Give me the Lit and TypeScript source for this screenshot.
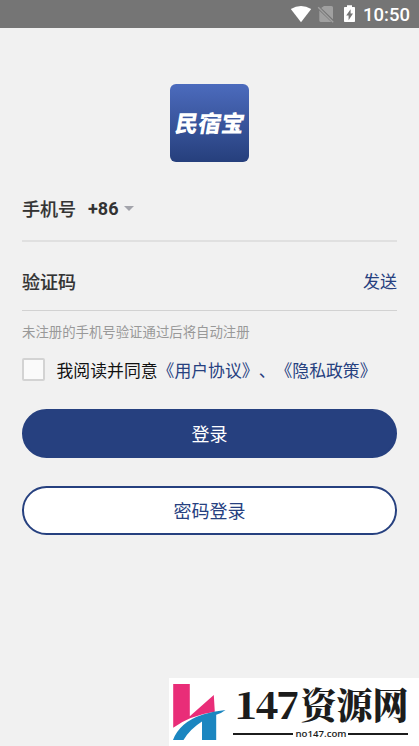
import { LitElement, html, css } from "lit";
import { customElement } from "lit/decorators.js";

@customElement("status-icons")
class StatusIcons extends LitElement {
  static styles = css`
    :host { display: block; width: 73px; height: 28px; }
    svg { display: block; }
  `;
  render() {
    return html`
      <svg width="73" height="28" viewBox="290 0 73 28">
        <path fill="#fff" d="M290.8 9.1Q301 2.7 311.2 9.1L301 22.2Z" />
        <path fill="#a0a0a0" d="M324 6H331.5Q333 6 333 7.5V19.2L321.2 7.9ZM319.3 10.5L331.3 22H320.6Q319.3 22 319.3 20.6Z" />
        <path stroke="#a0a0a0" stroke-width="1.4" d="M318.2 7.3L333.2 22.2" />
        <path fill="#fff" d="M347 5.3H352V7H354.2Q355 7 355 7.8V21.2Q355 22 354.2 22H344.8Q344 22 344 21.2V7.8Q344 7 344.8 7H347Z" />
        <path fill="#757575" d="M350.6 9.2V13.5H353L348.6 20.2V15.6H346.2Z" />
      </svg>
    `;
  }
}

@customElement("site-banner")
class SiteBanner extends LitElement {
  static styles = css`
    :host { display: block; width: 250px; height: 68px; background: #fff; }
    svg { display: block; overflow: visible; }
    .num { font: 900 38px "Noto Serif CJK SC", "Liberation Serif", serif; }
    .cjk { font: 900 36px "Noto Serif CJK SC", "Noto Sans CJK SC", serif; }
    .url { font: 600 9px "Open Sans", "Noto Sans", sans-serif; }
  `;
  render() {
    return html`
      <svg width="250" height="68" viewBox="169 678 250 68">
        <path fill="#e92d78" d="M173.2 684H189.8V716.2L213.8 695L214.8 711.8Q190 715.5 173.2 727.8Z" />
        <path fill="#1b86c0" d="M173 740Q180 722 203 714.6Q213 711.3 225.5 710Q222 713 216.2 714.8V740H202V721.5Q190 729 183.5 740Z" />
        <g fill="#1c1c1c">
          <text class="num" x="234.5" y="718.5" textLength="65">147</text>
          <text class="cjk" x="300.5" y="718.5" textLength="108">资源网</text>
          <text class="url" x="295.5" y="736.5" textLength="51" lengthAdjust="spacingAndGlyphs">no147.com</text>
          <rect x="233" y="733" width="60" height="2" />
          <rect x="348" y="733" width="60" height="2" />
        </g>
      </svg>
    `;
  }
}

@customElement("app-root")
class AppRoot extends LitElement {
  static styles = css`
    :host {
      display: flex; flex-direction: column; height: 746px; box-sizing: border-box;
      background: #f1f1f1; color: #333; font-family: Roboto, "Noto Sans CJK SC", sans-serif;
      text-spacing-trim: space-all;
    }
    .status { display: flex; justify-content: flex-end; background: #757575; height: 28px; flex: none; }
    .time { width: 56px; font: 500 18.5px/30px Roboto, sans-serif; color: #fff; }
    .logo {
      align-self: center; margin-top: 56px; width: 79px; height: 78px; border-radius: 6px; flex: none;
      background: linear-gradient(#4c6bbd, #263f7c);
    }
    .logo svg { display: block; overflow: visible; }
    .brand { font: 900 23px "Noto Sans CJK SC", sans-serif; }
    .form { padding: 0 22px; display: flex; flex-direction: column; flex: 1; }
    .row { display: flex; align-items: center; box-sizing: border-box; font-size: 18px; line-height: 26px; }
    .phone { height: 80px; padding-top: 13px; border-bottom: 2px solid #e0e0e0; }
    .code { height: 69px; padding-top: 10px; border-bottom: 1px solid #d2d2d2; justify-content: space-between; }
    .label { font-weight: 500; font-family: "Noto Sans CJK SC", sans-serif; -webkit-text-stroke: .15px #333; }
    .prefix { font-weight: 700; margin-left: 12px; padding-top: 2px; }
    .caret { border: 5px solid transparent; border-top: 5px solid #a3a4ab; border-bottom: 0; margin: 2px 0 0 6px; }
    .send { font-size: 17px; color: #26407f; padding-top: 2px; }
    .note { font-size: 13.4px; line-height: 20px; margin-top: 12px; color: #999; white-space: nowrap; }
    .agree { display: flex; align-items: center; height: 24px; margin-top: 15px; font-size: 16.85px; color: #111; white-space: nowrap; }
    .terms { padding-bottom: 2px; }
    .box { width: 19px; height: 19px; border: 2px solid #d3d3d3; border-radius: 2px; background: #fafafa; margin: 0 11.5px 1px 0; }
    .link { color: #26407f; }
    .btn {
      height: 49px; border-radius: 25px; box-sizing: border-box; border: 2px solid #26407f; flex: none; padding-bottom: 2px;
      display: flex; align-items: center; justify-content: center; font-size: 18px;
    }
    .primary { background: #26407f; color: #fff; margin-top: 27px; }
    .outline { background: #fff; color: #26407f; margin-top: 28px; }
    site-banner { align-self: flex-end; flex: none; }
  `;
  render() {
    return html`
      <div class="status"><status-icons></status-icons><div class="time">10:50</div></div>
      <div class="logo">
        <svg width="79" height="78" viewBox="0 0 79 78">
          <text class="brand" fill="#fff" transform="translate(4 48) skewX(-10)" textLength="69" lengthAdjust="spacingAndGlyphs">民宿宝</text>
        </svg>
      </div>
      <div class="form">
        <div class="row phone"><span class="label">手机号</span><span class="prefix">+86</span><i class="caret"></i></div>
        <div class="row code"><span class="label">验证码</span><span class="send">发送</span></div>
        <div class="note">未注册的手机号验证通过后将自动注册</div>
        <div class="agree"><i class="box"></i><span class="terms">我阅读并同意<span class="link">《用户协议》、《隐私政策》</span></span></div>
        <div class="btn primary">登录</div>
        <div class="btn outline">密码登录</div>
      </div>
      <site-banner></site-banner>
    `;
  }
}
